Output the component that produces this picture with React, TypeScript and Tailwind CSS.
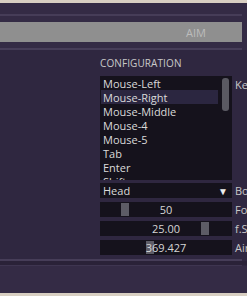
const keys = ['Mouse-Left', 'Mouse-Right', 'Mouse-Middle', 'Mouse-4', 'Mouse-5', 'Tab', 'Enter', 'Shift']

function Slider({ value, thumb, label }: { value: string; thumb: number; label: string }) {
  return (
    <div className="flex items-center">
      <div className="relative shrink-0 h-[15px] w-[132px] bg-[#15121c] flex items-center justify-center">
        <div className="absolute top-[1px] bottom-[1px] w-[8px] bg-[#5d5c66]" style={{ left: thumb }} />
        <span className="relative text-[11px] leading-none text-[#d6d6d6]">{value}</span>
      </div>
      <span className="ml-[3px] shrink-0 text-[11px] leading-none text-[#c8c8c8] whitespace-nowrap">{label}</span>
    </div>
  )
}

export default function App() {
  return (
    <div className="w-[247px] h-[296px] overflow-hidden bg-[#2f2740] flex flex-col" style={{ fontFamily: '"Open Sans", "Noto Sans", sans-serif' }}>
      <div className="h-[3px] shrink-0 bg-[#d8cfc2]" />

      {/* tab header */}
      <div className="shrink-0 bg-[#342b45] pt-[11px]">
        <div className="h-[2px] mr-[5px] bg-[#463d58]" />
        <div className="h-[6px]" />
        <div className="h-[20px] mr-[5px] bg-[#8f8f8f] flex items-center">
          <span className="ml-[186px] text-[11px] leading-none text-[#bcbcbc]">AIM</span>
        </div>
        <div className="h-[6px]" />
        <div className="h-[2px] mr-[5px] bg-[#463d58]" />
      </div>

      {/* config panel */}
      <div className="shrink-0 h-[209px] pl-[100px] pt-[7px] overflow-hidden">
        <div className="text-[10px] leading-[12px] text-[#c9c9c9] tracking-[0.1px]">CONFIGURATION</div>
        <div className="mt-[7px] flex">
          <div className="relative shrink-0 w-[132px] h-[104px] bg-[#15121c] overflow-hidden pl-[1px] pr-[14px]">
            {keys.map((k, i) => (
              <div
                key={k}
                className={`h-[14px] flex items-center pl-[2px] text-[11px] leading-none text-[#dadada] ${i === 1 ? 'bg-[#2b2640]' : ''}`}
              >
                {k}
              </div>
            ))}
            <div className="absolute left-[122px] top-[2px] w-[7px] h-[33px] rounded-[3px] bg-[#5a5962]" />
          </div>
          <span className="ml-[3px] mt-[3px] shrink-0 text-[11px] leading-none text-[#c8c8c8]">Key</span>
        </div>

        <div className="mt-[3px] flex items-center">
          <div className="shrink-0 w-[132px] h-[15px] bg-[#15121c] flex items-center justify-between pl-[3px] pr-[4px]">
            <span className="text-[11px] leading-none text-[#dadada]">Head</span>
            <span className="text-[10px] leading-none text-[#ececec]">▼</span>
          </div>
          <span className="ml-[3px] shrink-0 text-[11px] leading-none text-[#c8c8c8] whitespace-nowrap">Bone</span>
        </div>

        <div className="mt-[4px] flex flex-col gap-[4px]">
          <Slider value="50" thumb={21} label="Fov" />
          <Slider value="25.00" thumb={101} label="f.Smooth" />
          <Slider value="369.427" thumb={46} label="Air" />
        </div>
      </div>

      {/* footer */}
      <div className="h-[2px] shrink-0 mr-[5px] bg-[#463d58]" />
      <div className="h-[4px] shrink-0 bg-[#2a2238]" />
      <div className="h-[1px] shrink-0 mr-[5px] bg-[#3e3550]" />
      <div className="h-[27px] shrink-0 bg-[#342b45]" />
      <div className="flex-1 bg-[#d8cfc2]" />
    </div>
  )
}
